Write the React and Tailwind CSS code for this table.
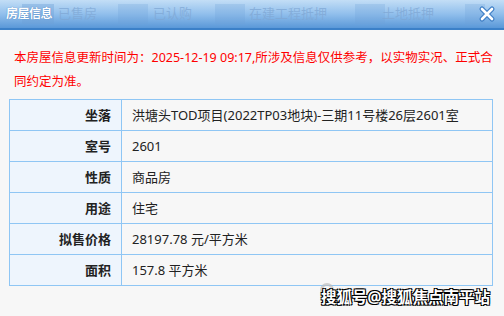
const tabs = [
  { label: '已售房', x: 'ml-[6px]' },
  { label: '已认购', x: 'ml-[56px]' },
  { label: '在建工程抵押', x: 'ml-[57px]' },
  { label: '土地抵押', x: 'ml-[55px]' },
];

const rows = [
  ['坐落', '洪塘头TOD项目(2022TP03地块)-三期11号楼26层2601室'],
  ['室号', '2601'],
  ['性质', '商品房'],
  ['用途', '住宅'],
  ['拟售价格', '28197.78 元/平方米'],
  ['面积', '157.8 平方米'],
];

function CloseIcon() {
  return (
    <svg width="18" height="18" viewBox="0 0 18 18">
      <path d="M4 4 L14 14 M14 4 L4 14" stroke="#3f7fc6" strokeWidth="5" strokeLinecap="round" />
      <path d="M4 4 L14 14 M14 4 L4 14" stroke="#ffffff" strokeWidth="2.6" strokeLinecap="round" />
    </svg>
  );
}

export default function App() {
  return (
    <div
      className="relative w-[504px] h-[316px] overflow-hidden bg-[#f7f7f7]"
      style={{ fontFamily: '"Noto Sans", "Noto Sans CJK SC", sans-serif' }}
    >
      {/* title bar */}
      <div className="relative h-[30px] bg-gradient-to-b from-[#c3def6] via-[#91bfec] to-[#5a98d8] border-b-2 border-[#3b80c8] flex items-center">
        <div className="absolute inset-0 flex items-center pointer-events-none">
          <div className="ml-[22px] w-[32px] h-[20px] bg-[#6d9fd6]/40" />
          <div className="ml-[64px] w-[30px] h-[20px] bg-[#6d9fd6]/25" />
          <div className="ml-[67px] w-[30px] h-[20px] bg-[#6d9fd6]/25" />
          <div className="ml-[110px] w-[30px] h-[20px] bg-[#6d9fd6]/25" />
          <div className="ml-[80px] w-[20px] h-[20px] bg-[#6d9fd6]/25" />
        </div>
        <span className="relative ml-[6px] text-[12px] font-bold text-white [text-shadow:0_0_1px_#3a6fb0] tracking-[-0.5px]">
          房屋信息
        </span>
        {tabs.map((t) => (
          <span key={t.label} className={`relative ${t.x} text-[13px] text-[#7fa7d4]/75`}>
            {t.label}
          </span>
        ))}
        <div className="relative ml-auto mr-[8px] flex items-center">
          <CloseIcon />
        </div>
      </div>

      {/* notice */}
      <div className="px-[14px] pt-[16px] text-[12.5px] leading-[24px] text-[#ff0000]">
        <div className="whitespace-nowrap">
          本房屋信息更新时间为：2025-12-19 09:17,所涉及信息仅供参考，以实物实况、正式合
        </div>
        <div>同约定为准。</div>
      </div>

      {/* table */}
      <table className="mt-[5px] ml-[9px] w-[484px] border-collapse text-[13px] text-[#222]">
        <tbody>
          {rows.map(([k, v]) => (
            <tr key={k} className="h-[31px]">
              <td className="w-[112px] border border-[#8fc6f4] bg-[#eef5fd] pr-[10px] text-right font-bold leading-[18px]">
                {k}
              </td>
              <td className="border border-[#8fc6f4] pl-[10px] leading-[18px]">{v}</td>
            </tr>
          ))}
        </tbody>
      </table>

      {/* watermark */}
      <div className="absolute left-[320px] top-[283px] w-[14px] h-[14px] rounded-full border-[3px] border-[#bdbdbd]/70" />
      <div className="absolute right-[14px] top-[286px] text-[15.5px] font-bold text-white [text-shadow:1px_1px_0_#000,-1px_-1px_0_#000,1px_-1px_0_#000,-1px_1px_0_#000]">
        搜狐号@搜狐焦点南平站
      </div>
    </div>
  );
}
